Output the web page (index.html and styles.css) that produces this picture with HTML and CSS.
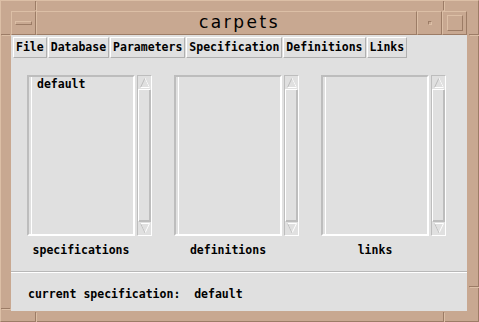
FILE: index.html
```html
<!DOCTYPE html>
<html lang="en">
<head>
    <meta charset="UTF-8">
    <title>carpets</title>
    <link rel="stylesheet" href="styles.css">
</head>
<body>

    <div class="frame">
        <span class="notch notch-tl-v"></span>
        <span class="notch notch-tl-h"></span>
        <span class="notch notch-tr-v"></span>
        <span class="notch notch-tr-h"></span>
        <span class="notch notch-bl-v"></span>
        <span class="notch notch-bl-h"></span>
        <span class="notch notch-br-v"></span>
        <span class="notch notch-br-h"></span>

        <div class="titlebar">
            <div class="wm-btn"><span class="menu-bar"></span></div>
            <div class="title">carpets</div>
            <div class="wm-btn"><span class="min-dot"></span></div>
            <div class="wm-btn"><span class="max-box"></span></div>
        </div>

        <div class="client">
            <div class="menubar">
                <span class="menu-item">File</span>
                <span class="menu-item">Database</span>
                <span class="menu-item">Parameters</span>
                <span class="menu-item">Specification</span>
                <span class="menu-item">Definitions</span>
                <span class="menu-item">Links</span>
            </div>

            <div class="panels">
                <div class="panel">
                    <div class="list-row">
                        <div class="list"><div class="list-item">default</div></div>
                        <div class="scrollbar">
                            <div class="arrow"><svg width="12" height="13" viewBox="0 0 12 13"><path d="M1.5 11.5 L6 2 L10.5 11.5 Z" fill="none" stroke="#bdbdbd" stroke-width="1"/><path d="M6 2 L10.5 11.5 L1.5 11.5" fill="none" stroke="#fff" stroke-width="1"/></svg></div>
                            <div class="slider"></div>
                            <div class="arrow"><svg width="12" height="13" viewBox="0 0 12 13"><path d="M1.5 1.5 L6 11 L10.5 1.5 Z" fill="none" stroke="#fff" stroke-width="1"/><path d="M1.5 1.5 L6 11" fill="none" stroke="#bdbdbd" stroke-width="1"/></svg></div>
                        </div>
                    </div>
                    <div class="label">specifications</div>
                </div>
                <div class="panel">
                    <div class="list-row">
                        <div class="list"></div>
                        <div class="scrollbar">
                            <div class="arrow"><svg width="12" height="13" viewBox="0 0 12 13"><path d="M1.5 11.5 L6 2 L10.5 11.5 Z" fill="none" stroke="#bdbdbd" stroke-width="1"/><path d="M6 2 L10.5 11.5 L1.5 11.5" fill="none" stroke="#fff" stroke-width="1"/></svg></div>
                            <div class="slider"></div>
                            <div class="arrow"><svg width="12" height="13" viewBox="0 0 12 13"><path d="M1.5 1.5 L6 11 L10.5 1.5 Z" fill="none" stroke="#fff" stroke-width="1"/><path d="M1.5 1.5 L6 11" fill="none" stroke="#bdbdbd" stroke-width="1"/></svg></div>
                        </div>
                    </div>
                    <div class="label">definitions</div>
                </div>
                <div class="panel">
                    <div class="list-row">
                        <div class="list"></div>
                        <div class="scrollbar">
                            <div class="arrow"><svg width="12" height="13" viewBox="0 0 12 13"><path d="M1.5 11.5 L6 2 L10.5 11.5 Z" fill="none" stroke="#bdbdbd" stroke-width="1"/><path d="M6 2 L10.5 11.5 L1.5 11.5" fill="none" stroke="#fff" stroke-width="1"/></svg></div>
                            <div class="slider"></div>
                            <div class="arrow"><svg width="12" height="13" viewBox="0 0 12 13"><path d="M1.5 1.5 L6 11 L10.5 1.5 Z" fill="none" stroke="#fff" stroke-width="1"/><path d="M1.5 1.5 L6 11" fill="none" stroke="#bdbdbd" stroke-width="1"/></svg></div>
                        </div>
                    </div>
                    <div class="label">links</div>
                </div>
            </div>

            <div class="status">current specification:&nbsp;&nbsp;default</div>
        </div>
    </div>

</body>
</html>
```

FILE: styles.css
```css
body {
    margin: 0;
    background-color: #c8a891;
    font-family: "DejaVu Sans Mono", "Liberation Mono", monospace;
}
.frame {
    position: relative;
    width: 479px;
    height: 322px;
    box-sizing: border-box;
    padding: 10px 11px 10px 10px;
    background-color: #c8a891;
    border-top: 1px solid #dcbfa6;
    border-left: 1px solid #dcbfa6;
    border-right: 1px solid #9c7c66;
    border-bottom: 1px solid #9c7c66;
    display: flex;
    flex-direction: column;
}
.notch {
    position: absolute;
    background-color: #9c7c66;
    box-shadow: 1px 1px 0 #dcbfa6;
}
.notch-tl-v { left: 34px; top: 0; width: 1px; height: 9px; }
.notch-tl-h { left: 0; top: 33px; width: 9px; height: 1px; }
.notch-tr-v { left: 442px; top: 0; width: 1px; height: 9px; }
.notch-tr-h { right: 0; top: 33px; width: 9px; height: 1px; }
.notch-bl-v { left: 34px; bottom: 0; width: 1px; height: 9px; }
.notch-bl-h { left: 0; bottom: 12px; width: 9px; height: 1px; }
.notch-br-v { left: 442px; bottom: 0; width: 1px; height: 9px; }
.notch-br-h { right: 0; bottom: 34px; width: 9px; height: 1px; }

.titlebar {
    display: flex;
    height: 24px;
    flex-shrink: 0;
}
.wm-btn {
    width: 25px;
    box-sizing: border-box;
    border-top: 1px solid #dcbfa6;
    border-left: 1px solid #dcbfa6;
    border-right: 1px solid #9c7c66;
    border-bottom: 1px solid #9c7c66;
    display: flex;
    align-items: center;
    justify-content: center;
}
.menu-bar {
    width: 15px;
    height: 2px;
    border-top: 1px solid #dcbfa6;
    border-left: 1px solid #dcbfa6;
    border-right: 1px solid #9c7c66;
    border-bottom: 1px solid #9c7c66;
}
.min-dot {
    width: 2px;
    height: 2px;
    border-top: 1px solid #9c7c66;
    border-left: 1px solid #9c7c66;
    border-right: 1px solid #dcbfa6;
    border-bottom: 1px solid #dcbfa6;
}
.max-box {
    width: 14px;
    height: 14px;
    border-top: 1px solid #dcbfa6;
    border-left: 1px solid #dcbfa6;
    border-right: 1px solid #9c7c66;
    border-bottom: 1px solid #9c7c66;
}
.title {
    flex: 1;
    box-sizing: border-box;
    padding-left: 26px;
    border-top: 1px solid #dcbfa6;
    border-left: 1px solid #dcbfa6;
    border-right: 1px solid #9c7c66;
    border-bottom: 1px solid #9c7c66;
    text-align: center;
    font-family: "DejaVu Sans", sans-serif;
    font-size: 17px;
    letter-spacing: 2.5px;
    line-height: 21px;
    color: #000;
}

.client {
    flex: 1;
    background-color: #e0e0e0;
    display: flex;
    flex-direction: column;
    font-weight: bold;
    font-size: 11.5px;
    color: #000;
}
.menubar {
    display: flex;
    gap: 1px;
    padding: 2px 0 0 2px;
}
.menu-item {
    padding: 0 2px;
    height: 21px;
    line-height: 19px;
    box-sizing: border-box;
    border-top: 1px solid #fff;
    border-left: 1px solid #fff;
    border-right: 1px solid #b0b0b0;
    border-bottom: 1px solid #b0b0b0;
    background-color: #e0e0e0;
}
.panels {
    display: flex;
    gap: 22px;
    padding: 17px 0 0 16px;
}
.panel {
    width: 125px;
    display: flex;
    flex-direction: column;
}
.list-row {
    display: flex;
    gap: 2px;
    height: 161px;
}
.list {
    flex: 1;
    box-sizing: border-box;
    border-top: 2px solid #bdbdbd;
    border-left: 2px solid #bdbdbd;
    border-right: 2px solid #fff;
    border-bottom: 2px solid #fff;
    box-shadow: inset 2px 0 0 #e0e0e0, inset 3px 0 0 #fff;
    padding: 1px 0 0 8px;
}
.list-item {
    line-height: 13px;
}
.scrollbar {
    width: 15px;
    box-sizing: border-box;
    border-top: 1px solid #bdbdbd;
    border-left: 1px solid #bdbdbd;
    border-right: 1px solid #fff;
    border-bottom: 1px solid #fff;
    display: flex;
    flex-direction: column;
}
.arrow {
    height: 13px;
    display: flex;
    justify-content: center;
}
.slider {
    flex: 1;
    border-top: 1px solid #fff;
    border-left: 1px solid #fff;
    border-right: 1px solid #bdbdbd;
    border-bottom: 1px solid #bdbdbd;
    box-shadow: inset -1px -1px 0 #bdbdbd;
}
.label {
    width: 108px;
    text-align: center;
    margin-top: 7px;
    line-height: 14px;
}
.status {
    margin-top: 14px;
    border-top: 1px solid #b8b8b8;
    box-shadow: inset 0 1px 0 #fff;
    padding: 15px 0 0 17px;
    line-height: 14px;
}
```
